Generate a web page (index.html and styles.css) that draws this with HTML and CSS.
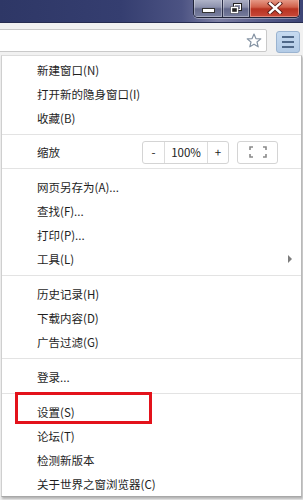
FILE: index.html
```html
<!DOCTYPE html>
<html lang="zh-CN">
<head>
<meta charset="utf-8">
<title>菜单</title>
<link rel="stylesheet" href="styles.css">
</head>
<body>
<div class="titlebar">
  <div class="winctrl">
    <div class="wbtn wmin"><span class="minbar"></span></div>
    <div class="wbtn wmax">
      <svg width="12" height="11" viewBox="0 0 12 11"><rect x="3.5" y="0.5" width="8" height="7" fill="none" stroke="#222" stroke-width="1"/><rect x="4.5" y="1.5" width="6" height="5" fill="none" stroke="#fff" stroke-width="1"/><rect x="0.5" y="3.5" width="8" height="7" fill="#222"/><rect x="1.5" y="4.5" width="6" height="5" fill="none" stroke="#fff" stroke-width="1.4"/></svg>
    </div>
    <div class="wbtn wclose">
      <svg width="16" height="12" viewBox="0 0 16 12"><path d="M3 1.5 L13 10.5 M13 1.5 L3 10.5" stroke="#5a1e18" stroke-width="4.2" stroke-linecap="square"/><path d="M3 1.5 L13 10.5 M13 1.5 L3 10.5" stroke="#fff" stroke-width="2.4" stroke-linecap="square"/></svg>
    </div>
  </div>
</div>
<div class="toolbar">
  <div class="omnibox">
    <svg class="star" width="16" height="15" viewBox="0 0 16 15"><path d="M8 1 L9.9 5.6 L14.8 5.9 L11 9 L12.2 13.8 L8 11.2 L3.8 13.8 L5 9 L1.2 5.9 L6.1 5.6 Z" fill="#fff" stroke="#8593a3" stroke-width="1.2" stroke-linejoin="round"/></svg>
  </div>
  <div class="menubtn"><span></span><span></span><span></span></div>
</div>
<div class="menu">
  <div class="item">新建窗口(N)</div>
  <div class="item">打开新的隐身窗口(I)</div>
  <div class="item">收藏(B)</div>
  <div class="sep"></div>
  <div class="zoomrow">
    <span class="label">缩放</span>
    <div class="zoomctrls">
      <div class="zoomgroup">
        <span class="zcell zminus">-</span>
        <span class="zcell zval">100%</span>
        <span class="zcell zplus">+</span>
      </div>
      <div class="fsbox">
        <svg width="18" height="12" viewBox="0 0 18 12"><path d="M1 4 V1 H4 M14 1 H17 V4 M17 8 V11 H14 M4 11 H1 V8" fill="none" stroke="#8a8a8a" stroke-width="1.6"/></svg>
      </div>
    </div>
  </div>
  <div class="sep"></div>
  <div class="item">网页另存为(A)...</div>
  <div class="item">查找(F)...</div>
  <div class="item">打印(P)...</div>
  <div class="item has-sub">工具(L)<span class="arrow"></span></div>
  <div class="sep"></div>
  <div class="item">历史记录(H)</div>
  <div class="item">下载内容(D)</div>
  <div class="item">广告过滤(G)</div>
  <div class="sep"></div>
  <div class="item">登录...</div>
  <div class="sep"></div>
  <div class="item">设置(S)</div>
  <div class="item">论坛(T)</div>
  <div class="item">检测新版本</div>
  <div class="item">关于世界之窗浏览器(C)</div>
</div>
<div class="highlight"></div>
</body>
</html>
```
FILE: styles.css
```css
html, body {
  margin: 0;
  padding: 0;
  width: 303px;
  height: 500px;
  overflow: hidden;
  background: #f0f0f0;
  font-family: "Noto Sans CJK SC", "Microsoft YaHei", sans-serif;
  position: relative;
}

.titlebar {
  height: 23px;
  box-sizing: border-box;
  background: linear-gradient(to right, #2e3766 0%, #353e70 40%, #4c5383 60%, #7d7fa3 72%, #5a5f8c 85%, #3c4475 100%);
  border-bottom: 1px solid #262c50;
  display: flex;
  justify-content: flex-end;
  padding-right: 3px;
}

.winctrl {
  display: flex;
  height: 18px;
  margin-top: -1px;
  border: 1px solid #1f2338;
  border-top: none;
  border-radius: 0 0 5px 5px;
  overflow: hidden;
  box-shadow: 0 1px 0 rgba(255,255,255,0.35);
}

.wbtn {
  display: flex;
  align-items: center;
  justify-content: center;
  height: 100%;
  box-sizing: border-box;
  border-left: 1px solid #2a2e48;
}

.wmin {
  width: 28px;
  border-left: none;
  background: linear-gradient(to bottom, #b4b8cc 0%, #8d92ad 45%, #666b8c 55%, #7a80a0 100%);
  box-shadow: inset 0 0 0 1px rgba(255,255,255,0.35);
}

.minbar {
  width: 11px;
  height: 3px;
  background: #fff;
  border: 1px solid #333;
  margin-top: 5px;
}

.wmax {
  width: 27px;
  background: linear-gradient(to bottom, #b0b4c8 0%, #888ca8 45%, #62678a 55%, #767c9c 100%);
  box-shadow: inset 0 0 0 1px rgba(255,255,255,0.35);
}

.wclose {
  width: 50px;
  background: linear-gradient(to bottom, #e8a08e 0%, #d0604a 45%, #b83220 55%, #c8493a 100%);
  box-shadow: inset 0 0 0 1px rgba(255,220,210,0.45);
}

.toolbar {
  height: 32px;
  box-sizing: border-box;
  display: flex;
  align-items: flex-start;
  background: #f1f1f1;
}

.omnibox {
  margin-left: -2px;
  margin-top: 6px;
  width: 269px;
  height: 23px;
  box-sizing: border-box;
  background: #fff;
  border: 1px solid #c9c9c9;
  border-radius: 2px;
  display: flex;
  align-items: center;
  justify-content: flex-end;
  padding-right: 4px;
}

.star {
  display: block;
}

.menubtn {
  margin-left: 9px;
  margin-top: 8px;
  width: 24px;
  height: 22px;
  box-sizing: border-box;
  background: linear-gradient(to bottom, #c6daf0, #b3cbe6);
  border: 1px solid #9ab3d0;
  border-radius: 3px;
  display: flex;
  flex-direction: column;
  align-items: center;
  justify-content: center;
  gap: 3px;
}

.menubtn span {
  display: block;
  width: 12px;
  height: 2px;
  background: #4f6888;
}

.menu {
  margin-left: 1px;
  width: 301px;
  height: 442px;
  box-sizing: border-box;
  background: #fff;
  border-top: 1px solid #dcdcdc;
  border-left: 1px solid #cfcfcf;
  border-right: 1px solid #b9b9b9;
  border-bottom: 1px solid #a8a8a8;
  box-shadow: 1px 2px 2px rgba(0,0,0,0.25);
  padding-top: 2px;
  color: #1e1e1e;
  font-size: 11.5px;
}

.item {
  height: 24px;
  line-height: 24px;
  padding-left: 35px;
  padding-right: 9px;
  white-space: nowrap;
}

.has-sub {
  display: flex;
  align-items: center;
  justify-content: space-between;
}

.arrow {
  width: 0;
  height: 0;
  border-left: 4px solid #7c7c7c;
  border-top: 4px solid transparent;
  border-bottom: 4px solid transparent;
}

.sep {
  height: 1px;
  background: #e3e3e3;
  margin: 4px 0 6px;
}

.zoomrow {
  height: 24px;
  display: flex;
  align-items: center;
  justify-content: space-between;
  padding-left: 35px;
  padding-right: 23px;
  margin-top: -1px;
  margin-bottom: 1px;
}

.zoomctrls {
  display: flex;
  align-items: center;
  gap: 8px;
}

.zoomgroup {
  display: flex;
  height: 23px;
  box-sizing: border-box;
  border: 1px solid #d4d4d4;
  border-radius: 3px;
}

.zcell {
  display: flex;
  align-items: center;
  justify-content: center;
  height: 100%;
  color: #222;
}

.zminus {
  width: 21px;
  border-right: 1px solid #dcdcdc;
}

.zval {
  width: 42px;
  border-right: 1px solid #dcdcdc;
}

.zplus {
  width: 20px;
}

.fsbox {
  width: 41px;
  height: 23px;
  box-sizing: border-box;
  border: 1px solid #d4d4d4;
  border-radius: 3px;
  display: flex;
  align-items: center;
  justify-content: center;
}

.highlight {
  position: absolute;
  left: 15px;
  top: 392px;
  width: 137px;
  height: 32px;
  box-sizing: border-box;
  border: 3px solid #e3121b;
}
```
